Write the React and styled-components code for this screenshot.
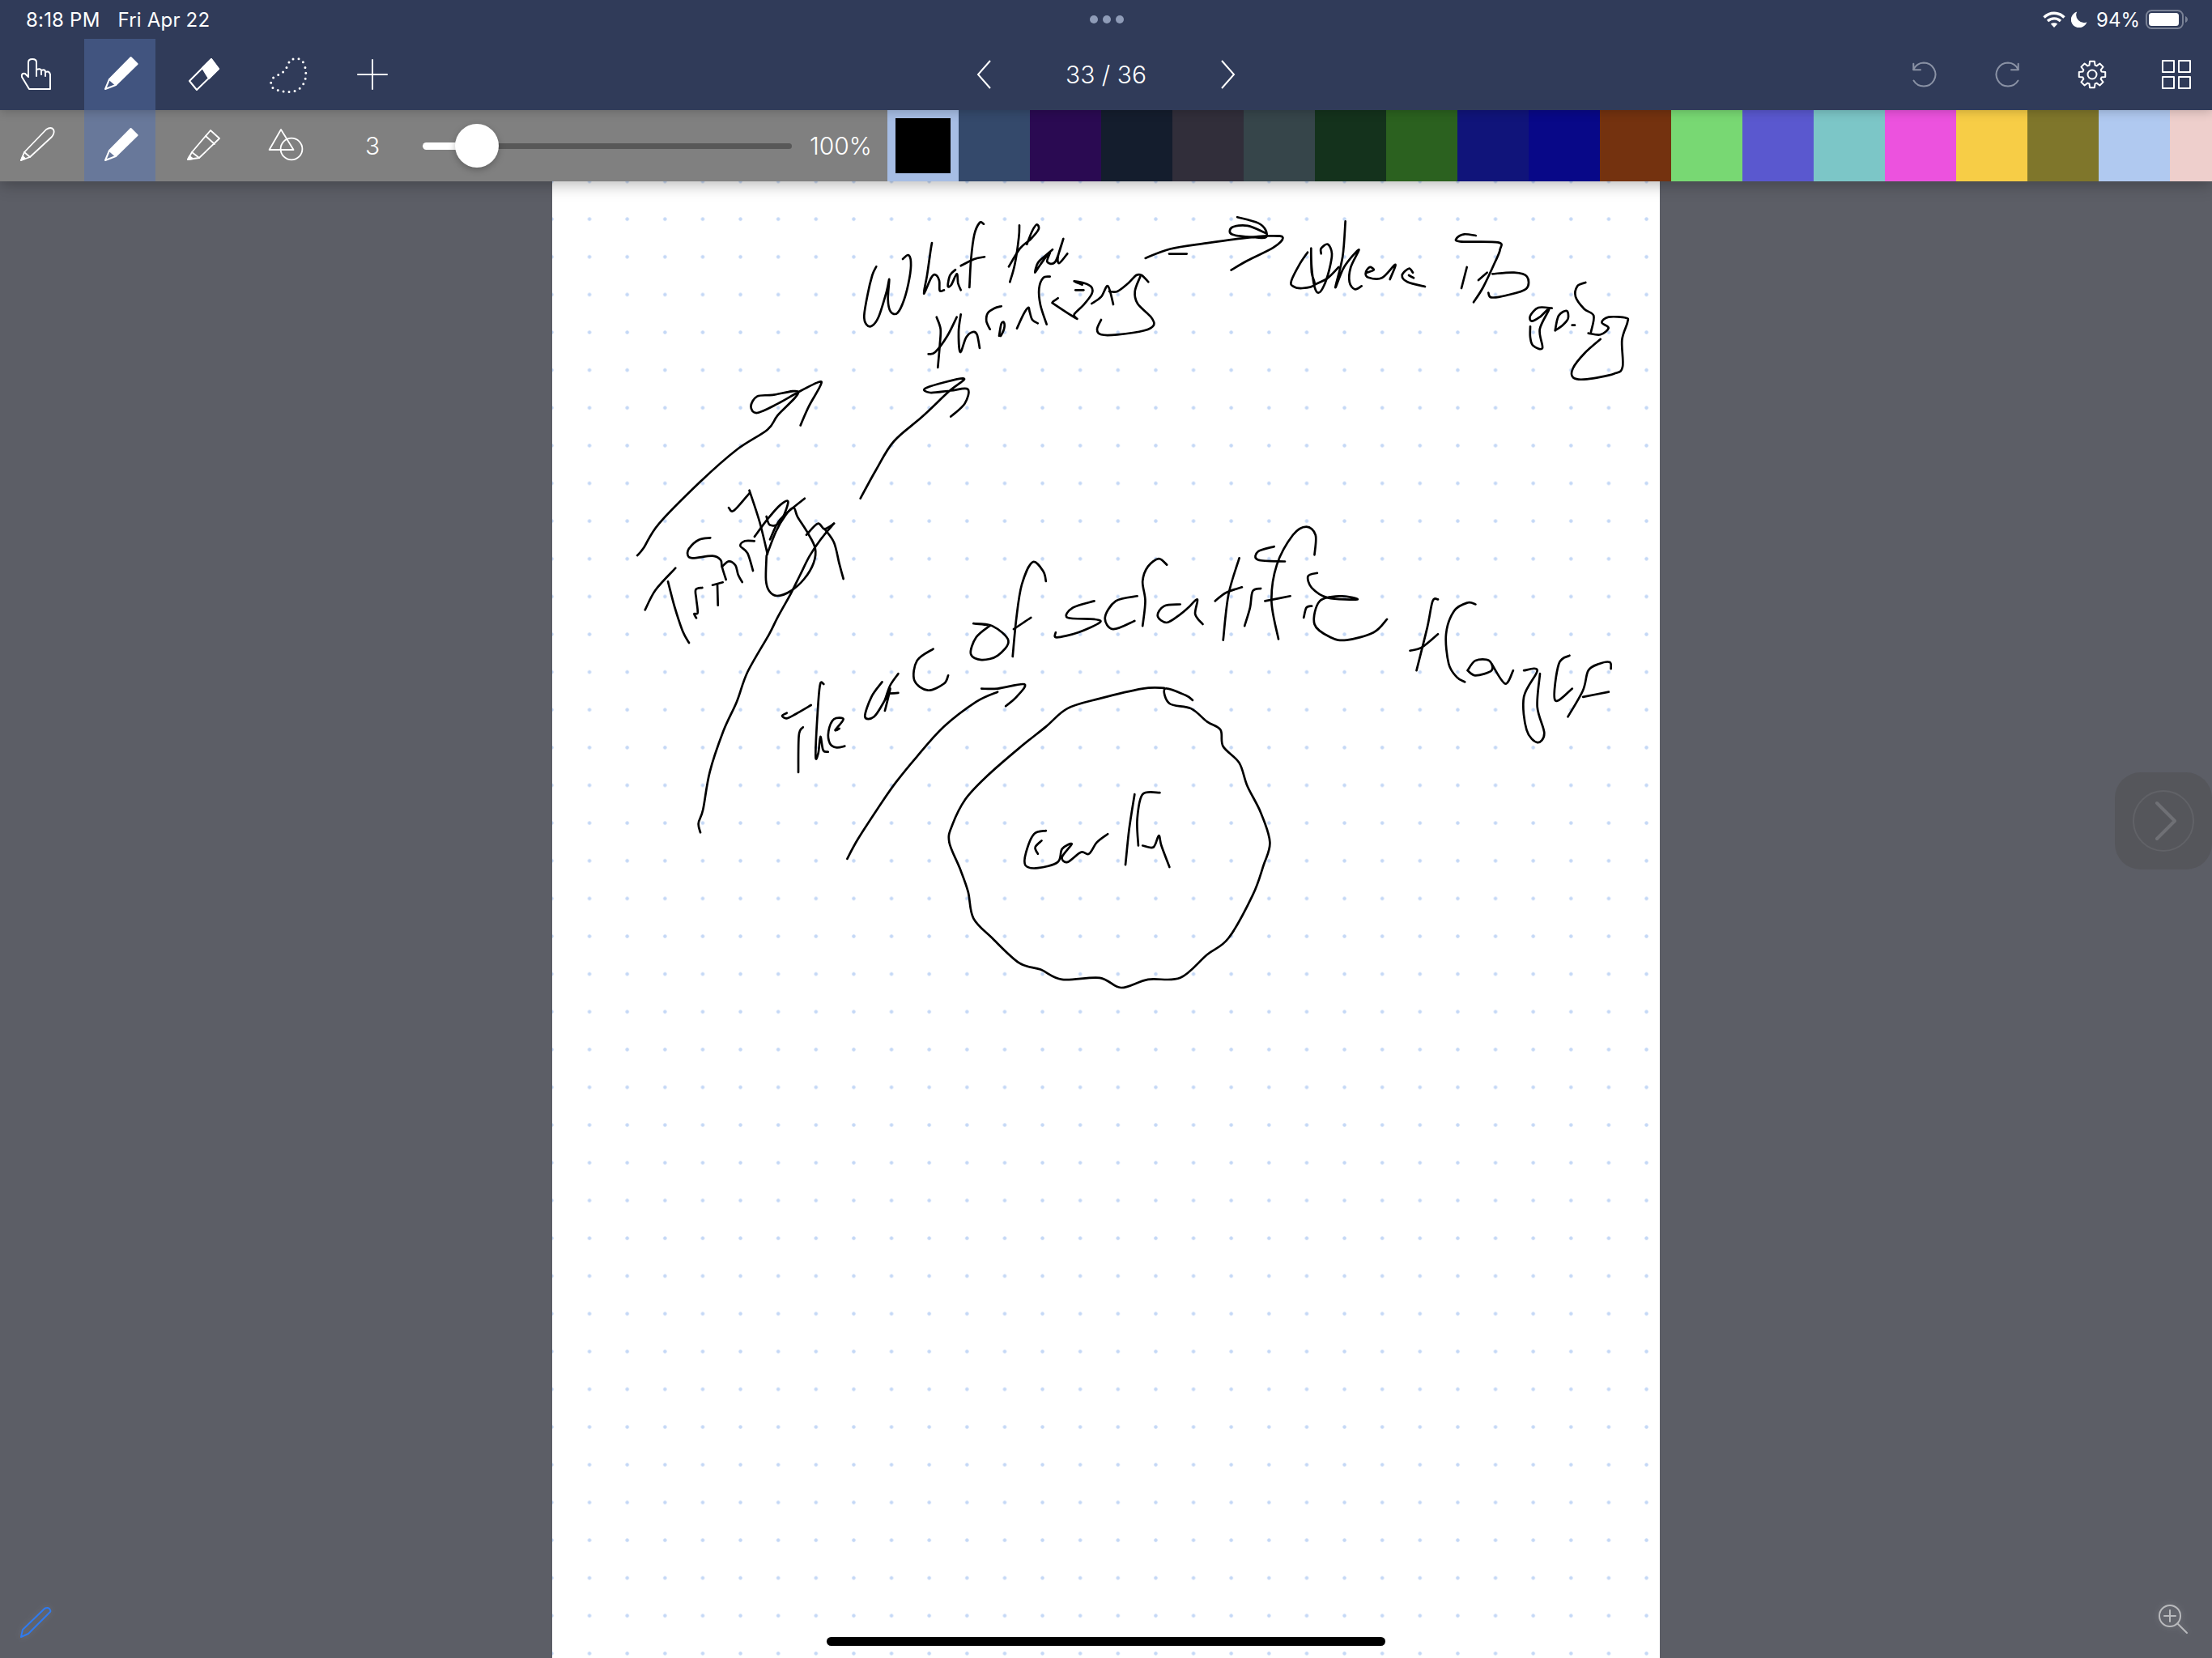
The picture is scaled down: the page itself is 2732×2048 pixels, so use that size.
import React from "react";
import styled, { createGlobalStyle } from "styled-components";

const GlobalStyle = createGlobalStyle`
  html, body {
    margin: 0;
    padding: 0;
    background: #5c5e66;
    overflow: hidden;
  }
  * { box-sizing: border-box; }
`;

const SWATCHES = [
  "#34496b", "#2a0a52", "#141d2d", "#312e3a", "#36454a", "#14321c", "#2b611f", "#10147a", "#080888",
  "#74320f", "#78d873", "#5a58cf", "#7cc6c7", "#ec52de", "#f7cd46", "#7f762b", "#b0c9f0", "#eecfcc",
];

// handwriting, traced per zoom crop: crop origin, scale, then flat x,y lists
const INK = [
  { x: 1040, y: 260, sx: 3, sy: 3, strokes: [
    [127,208,112,240,95,310,82,390,90,422,110,428,135,395,165,300,175,255,170,330,180,375,205,380,230,330,250,250,255,190,245,165,225,180],
    [333,120,328,150,315,240,303,308,330,250,345,238,360,260,362,297,378,295],
    [420,220,400,240,392,280,405,275,425,235,430,270,440,295],
    [525,50,510,45,490,90,478,180,472,285],
    [440,205,490,180,528,172],
    [657,55,655,100,640,200,622,265],
    [618,208,660,140,700,105,728,70,722,52,705,75,685,125],
    [780,145,750,170,725,195,715,230,735,200,770,155,760,190,790,190,820,105,800,170,805,195,835,160],
    [350,395,365,440,362,500,355,582],
    [320,532,345,525,390,465,425,395],
    [440,385,432,450,438,525,460,470,485,450,500,460,510,510],
    [548,440,535,410,540,380,565,362,590,355],
    [582,465,590,420,600,415,600,440,588,465],
    [648,437,672,385,690,360,695,375,705,405,725,418],
    [770,245,745,250,730,290,735,350,758,422],
    [800,325,780,340,790,350,868,400,860,385,895,350,925,310,925,285,900,270,860,262,890,275],
    [865,295,895,295],
    [925,345,960,320,985,280,1005,348],
    [990,300,1020,300,1060,270,1090,240,1110,240,1135,265],
    [1105,245,1085,300,1095,345,1145,395,1155,425,1120,445,1020,460,960,460,945,440,960,405],
  ]},
  { x: 680, y: 220, sx: 1.568, sy: 2.8, strokes: [
    [1152,277,1200,245,1270,225,1340,208,1390,200,1418,205,1400,240,1350,285,1318,318],
    [1198,262,1232,262],
    [1330,135,1370,155,1385,180,1385,205,1365,205,1320,195,1320,170,1350,165,1385,190],
    [168,1305,180,1280,210,1195,290,1050,360,940,420,870,440,820,480,740,430,750,400,755,388,790,400,812,440,780,480,740,520,705,522,720,500,790,484,855],
    [600,1108,630,1010,665,910,720,825,770,740,800,693,728,725,735,742,775,735,808,730,802,780,775,825],
    [385,1080,405,1190,420,1300],
    [345,1140,355,1150,385,1090],
    [395,1240,420,1180,445,1130,460,1120,445,1190,425,1200,418,1170],
    [492,1108,445,1180,425,1250],
  ]},
  { x: 780, y: 640, sx: 3, sy: 3, strokes: [
    [50,340,90,265,163,185],
    [135,235,160,330,190,420,213,462],
    [240,370,232,355,245,350,240,300,238,265,262,258],
    [320,323,318,245],
    [300,248,338,238],
    [292,73,250,80,215,110,208,135,225,148,300,140,330,155,335,180,350,228],
    [335,180,360,160,385,175,395,210,410,237],
    [450,195,430,130,403,103,420,85,455,85],
    [500,140,498,230,510,270,540,288,590,270,640,225,675,165,680,110,650,50,615,-5,600,-39,570,-10,535,50,500,140],
    [750,20,700,80,660,140,625,210,590,280,540,370,510,430,430,570,390,680,340,790,290,940,265,1080,248,1130,255,1165],
    [648,62,690,20,715,40,750,20],
    [715,40,750,90,770,170,785,225],
    [665,693,610,725,575,742,558,732,575,722],
    [635,775,620,805,618,942],
    [712,615,700,612,692,680,682,878,692,870,700,810,710,860,728,866],
    [770,780,755,785,785,745,750,745,730,790,735,835,760,850,790,845],
  ]},
  { x: 1000, y: 620, sx: 1.5077, sy: 2.45, strokes: [
    [135,545,115,590,103,650,120,650,140,600,150,565,140,632],
    [140,600,150,555,165,520],
    [145,580,165,578],
    [230,445,200,480,195,540,220,570,250,550,258,525],
    [335,375,310,410,300,460,320,478,350,465,370,420,340,375,305,368,330,372],
    [378,468,385,350,395,250,415,182,435,210,440,240],
    [380,385,412,350],
    [530,300,490,320,480,350,530,355,540,365,500,395,460,410,458,395],
    [610,285,570,300,550,350,565,385,605,360],
    [620,375,625,300,620,240,630,195,650,172,665,190],
    [690,310,660,315,648,345,665,365,690,340,705,320,722,295,718,340,732,370],
    [800,170,780,280,770,418],
    [755,300,775,275,805,258],
    [810,375,820,320,825,270,840,262],
    [873,415,860,300,870,190,900,100,925,75,942,100,940,160],
    [848,300,895,285],
    [865,135,835,150,835,175,885,180],
    [920,350,925,320,935,315],
    [945,215,928,225,935,260,965,290,1020,295,990,285,950,300,940,370,970,410,1000,418,1050,395,1075,355],
    [1170,295,1160,300,1150,380,1130,510],
    [1118,450,1140,440,1170,400],
    [1220,545,1205,530,1190,490,1185,400,1200,330,1225,305,1240,310],
    [1225,510,1240,480,1265,480,1270,510,1240,525,1225,510],
    [1270,490,1295,550,1310,510],
    [1330,510,1355,510,1330,590,1335,690,1355,728,1368,700,1355,620,1360,520],
    [1415,465,1395,490,1388,600,1420,565],
    [1412,650,1440,570,1450,510,1470,490,1490,485,1492,505],
    [1440,590,1488,575],
    [70,1080,90,1020,130,920,160,850,200,770,250,680,310,605,350,575],
    [320,565,350,565,400,552,385,590,365,618],
    [660,563,620,565,540,595,480,625,440,680,390,745,330,830,290,900,265,980,260,1030,280,1110,295,1180,305,1260,340,1320,390,1395,430,1415,470,1445,540,1440,580,1470,630,1445,690,1440,740,1370,780,1320,825,1190,845,1100,857,1030,840,940,815,860,800,790,770,740,765,690,740,665,710,625,670,610,662,565,700,585,713,600],
    [440,995,418,1005,403,1060,402,1100,425,1108,462,1090,470,1050,488,1035,470,1075,480,1090,505,1060,520,1065,535,1030,555,1005],
    [425,1065,420,1045,432,1025],
    [605,885,595,990,588,1098],
    [612,1040,610,960,620,885,652,880],
    [620,1040,640,1045,650,1010,655,1040,670,1105],
  ]},
  { x: 1560, y: 220, sx: 3, sy: 3, strokes: [
    [165,275,135,320,105,380,110,400,145,408,190,395,180,350,178,260,180,330,190,400,205,425,225,400,245,340,255,280,240,245,215,260,215,280],
    [305,160,295,290,268,405,300,330,355,265,325,330,320,385,340,412,365,400],
    [190,395,240,370,280,330],
    [385,350,410,340,395,330,380,350,390,368,440,370,490,320,470,375],
    [555,350,540,335,515,360,535,385,600,402],
    [540,360,558,370],
    [755,330,735,408],
    [788,213,745,208,718,222,730,235,870,238,878,265,860,310,815,405,780,460],
    [798,378,830,350],
    [850,355,930,350,978,365,975,410,900,435,845,442,835,425],
    [1070,482,1020,480,990,510,995,530,1025,515,1060,485,1025,560,1035,630,1000,620,990,590,990,550],
    [1082,565,1095,510,1125,492,1130,520,1110,545,1082,565],
    [1145,545,1155,545],
    [1195,387,1165,400,1158,440,1190,485,1225,510,1215,570],
    [1205,575,1250,580,1280,555,1255,535,1280,515,1345,518,1350,535,1330,600,1332,700,1300,725,1200,745,1150,740,1148,705,1190,650,1250,597],
  ]},
];

// smooth a point list into a path (catmull-rom to bezier)
function strokePath(flat, crop) {
  const pts = [];
  for (let i = 0; i < flat.length; i += 2) {
    pts.push([crop.x + flat[i] / crop.sx, crop.y + flat[i + 1] / crop.sy]);
  }
  let d = `M${pts[0][0].toFixed(1)} ${pts[0][1].toFixed(1)}`;
  for (let i = 0; i < pts.length - 1; i++) {
    const p0 = pts[i - 1] || pts[i];
    const p1 = pts[i];
    const p2 = pts[i + 1];
    const p3 = pts[i + 2] || p2;
    const c1 = [p1[0] + (p2[0] - p0[0]) / 6, p1[1] + (p2[1] - p0[1]) / 6];
    const c2 = [p2[0] - (p3[0] - p1[0]) / 6, p2[1] - (p3[1] - p1[1]) / 6];
    d += `C${c1[0].toFixed(1)} ${c1[1].toFixed(1)} ${c2[0].toFixed(1)} ${c2[1].toFixed(1)} ${p2[0].toFixed(1)} ${p2[1].toFixed(1)}`;
  }
  return d;
}

// 8 tooth cog outline
function gearPath(cx, cy, outer, inner) {
  const pts = [];
  for (let i = 0; i < 8; i++) {
    const a = (i * Math.PI) / 4 - Math.PI / 2;
    const w = 0.18;
    const g = 0.3;
    pts.push([inner, a - g], [outer, a - w], [outer, a + w], [inner, a + g]);
  }
  return (
    pts
      .map(([r, a], i) => `${i ? "L" : "M"}${(cx + r * Math.cos(a)).toFixed(2)} ${(cy + r * Math.sin(a)).toFixed(2)}`)
      .join("") + "Z"
  );
}

const Icon = ({ children, color = "#fff", width = 2, flip }) => (
  <IconSvg
    viewBox="0 0 88 88"
    fill="none"
    stroke={color}
    strokeWidth={width}
    strokeLinejoin="round"
    strokeLinecap="round"
    $flip={flip}
  >
    {children}
  </IconSvg>
);

const PenIcon = () => (
  <Icon>
    <path d="M31 50L57.6 23L65.6 31L39 57Z" fill="#fff" />
    <path d="M31 50L26 62L39 57" />
  </Icon>
);

export default function App() {
  return (
    <Page>
      <GlobalStyle />
      <TopBar>
        <StatusBar>
          <Clock>
            <span>8:18 PM</span>
            <span>Fri Apr 22</span>
          </Clock>
          <Dots>
            <i />
            <i />
            <i />
          </Dots>
          <StatusRight>
            <svg width="28" height="22" viewBox="0 0 28 22" fill="none" stroke="#fff" strokeWidth="3.4">
              <path d="M1.5 8.5C8.5 1.5 19.5 1.5 26.5 8.5" />
              <path d="M6 13C10.5 8.8 17.5 8.8 22 13" />
              <path d="M14 21L9.8 16.6C12 14.7 16 14.7 18.2 16.6Z" fill="#fff" stroke="none" />
            </svg>
            <svg width="20" height="20" viewBox="0 0 20 20">
              <path d="M7.2 0.6A10 10 0 1 0 19.4 13.2A9.4 9.4 0 0 1 7.2 0.6Z" fill="#fff" />
            </svg>
            <BatteryText>94%</BatteryText>
            <svg width="52" height="24" viewBox="0 0 52 24">
              <rect x="1" y="1" width="45" height="22" rx="6.5" fill="none" stroke="#7a8296" strokeWidth="2" />
              <rect x="4" y="4" width="37" height="16" rx="3.5" fill="#fff" />
              <path d="M49 8C51 9 52 10.5 52 12C52 13.5 51 15 49 16Z" fill="#7a8296" />
            </svg>
          </StatusRight>
        </StatusBar>

        <Toolbar>
          <ToolGroup>
            <ToolCell>
              <Icon>
                <path d="M36 62L27 47Q26 42 31 43L35 47V29Q35 25 40 25Q45 25 45 29V38Q50 36 51 39Q56 37 56 41Q61 39 62 44V62Z" />
                <path d="M45 38V46M51 39V44M56 41V46" />
              </Icon>
            </ToolCell>
            <ToolCell $active>
              <PenIcon />
            </ToolCell>
            <ToolCell>
              <Icon>
                <path d="M26 52L53 25L62 37L35 63Z" />
                <path d="M42 36L53 25L62 37L50 49Z" fill="#fff" />
              </Icon>
            </ToolCell>
            <ToolCell>
              <Icon width={3}>
                <path
                  d="M50 25Q60 22 64 32Q67 42 65 50Q62 62 50 65Q35 67 24 60Q20 52 28 46Q40 42 43 33Q45 27 50 25Z"
                  strokeDasharray="0 7"
                />
              </Icon>
            </ToolCell>
            <ToolCell>
              <Icon>
                <path d="M44 26V62M26 44H62" />
              </Icon>
            </ToolCell>
          </ToolGroup>

          <PageNav>
            <ChevronSvg viewBox="0 0 18 36" fill="none" stroke="#fff" strokeWidth="2">
              <path d="M17 1L2 18L17 35" />
            </ChevronSvg>
            <PageCount>33 / 36</PageCount>
            <ChevronSvg viewBox="0 0 18 36" fill="none" stroke="#fff" strokeWidth="2">
              <path d="M1 1L16 18L1 35" />
            </ChevronSvg>
          </PageNav>

          <ToolGroup $right>
            <ToolCell>
              <Icon color="#8a92a5" flip>
                <path d="M56.7 38A14.5 14.5 0 0 0 44 29.5A14.5 14.5 0 1 0 56.5 51.5" />
                <path d="M56.7 30.7V38.3H48" />
              </Icon>
            </ToolCell>
            <ToolCell>
              <Icon color="#8a92a5">
                <path d="M56.7 38A14.5 14.5 0 0 0 44 29.5A14.5 14.5 0 1 0 56.5 51.5" />
                <path d="M56.7 30.7V38.3H48" />
              </Icon>
            </ToolCell>
            <ToolCell>
              <Icon>
                <path d={gearPath(44, 44, 16.5, 12)} />
                <circle cx="44" cy="44" r="5.5" />
              </Icon>
            </ToolCell>
            <ToolCell>
              <Icon>
                <rect x="27" y="27" width="14" height="14" />
                <rect x="47" y="27" width="14" height="14" />
                <rect x="27" y="47" width="14" height="14" />
                <rect x="47" y="47" width="14" height="14" />
              </Icon>
            </ToolCell>
          </ToolGroup>
        </Toolbar>
      </TopBar>

      <SubBar>
        <ToolGroup>
          <ToolCell>
            <Icon width={1.8}>
              <path d="M26 62L30 52L57 24Q63 20 66 24Q68 28 64 33L37 58Z" />
              <path d="M30 52L37 58" />
              <path d="M26 62L28 57L31 60Z" fill="#fff" />
            </Icon>
          </ToolCell>
          <ToolCell $active $light>
            <PenIcon />
          </ToolCell>
          <ToolCell>
            <Icon width={1.8}>
              <path d="M24 61L29 52L52 25L63 35L38 59Z" />
              <path d="M46 32L57 42M29 52L38 59" />
              <path d="M24 61L26 57L30 60Z" fill="#fff" />
            </Icon>
          </ToolCell>
          <ToolCell>
            <Icon width={1.8}>
              <path d="M35 24L20.6 49H50.5Z" />
              <circle cx="48" cy="48" r="13.4" />
            </Icon>
          </ToolCell>
          <SizeValue>3</SizeValue>
        </ToolGroup>

        <Slider>
          <SliderFill />
          <SliderThumb />
        </Slider>
        <Percent>100%</Percent>

        <Swatches>
          <Swatch $color="#a6bde4" $padded>
            <SwatchInner />
          </Swatch>
          {SWATCHES.map((color) => (
            <Swatch key={color} $color={color} />
          ))}
        </Swatches>
      </SubBar>

      <Canvas>
        <Paper>
          <InkLayer viewBox="682 224 1368 1824" fill="none" stroke="#000" strokeWidth="2.7" strokeLinecap="round" strokeLinejoin="round">
            {INK.map((crop) =>
              crop.strokes.map((flat, i) => <path key={`${crop.x}-${i}`} d={strokePath(flat, crop)} />)
            )}
          </InkLayer>
          <HomeIndicator />
        </Paper>

        <NextHandle>
          <svg width="120" height="120" viewBox="0 0 120 120" fill="none">
            <circle cx="60" cy="60" r="37" stroke="#616267" strokeWidth="2" />
            <path d="M52 38L74 60L52 82" stroke="#6f7075" strokeWidth="4" strokeLinecap="round" strokeLinejoin="round" />
          </svg>
        </NextHandle>

        <PencilBadge viewBox="0 0 48 48" fill="none" stroke="#2f7bf0" strokeWidth="2" strokeLinejoin="round">
          <path d="M6 42L8 33L35 7Q39 5 41 7Q43 10 42 11L15 38Z" />
        </PencilBadge>

        <ZoomBadge viewBox="0 0 48 48" fill="none" stroke="#b9babd" strokeWidth="2" strokeLinecap="round">
          <circle cx="20" cy="20" r="13" />
          <path d="M29.5 29.5L41 41M20 13V27M13 20H27" />
        </ZoomBadge>
      </Canvas>
    </Page>
  );
}

const Page = styled.div`
  position: relative;
  width: 2732px;
  height: 2048px;
  overflow: hidden;
  background: #5c5e66;
  display: flex;
  flex-direction: column;
  font-family: Inter, "Liberation Sans", sans-serif;
  color: #fff;
`;

const TopBar = styled.header`
  position: relative;
  z-index: 3;
  background: #303b59;
  box-shadow: 0 2px 12px rgba(0, 0, 0, 0.2);
`;

const StatusBar = styled.div`
  height: 48px;
  padding: 0 30px 0 32px;
  display: grid;
  grid-template-columns: 1fr auto 1fr;
  align-items: center;
`;

const Clock = styled.div`
  display: flex;
  gap: 22px;
  font-size: 24px;
  letter-spacing: 0.2px;
`;

const Dots = styled.div`
  display: flex;
  gap: 6px;
  i {
    width: 10px;
    height: 10px;
    border-radius: 50%;
    background: #8f9cb8;
  }
`;

const StatusRight = styled.div`
  display: flex;
  align-items: center;
  justify-content: flex-end;
  gap: 7px;
`;

const BatteryText = styled.span`
  font-size: 24px;
  margin-left: 4px;
`;

const Toolbar = styled.div`
  height: 88px;
  display: grid;
  grid-template-columns: 1fr auto 1fr;
  align-items: stretch;
`;

const ToolGroup = styled.div`
  flex: none;
  display: flex;
  gap: 16px;
  justify-content: ${(p) => (p.$right ? "flex-end" : "flex-start")};
`;

const ToolCell = styled.div`
  width: 88px;
  height: 88px;
  display: flex;
  align-items: center;
  justify-content: center;
  background: ${(p) => (p.$active ? (p.$light ? "#68789a" : "#41547f") : "transparent")};
`;

const IconSvg = styled.svg`
  width: 88px;
  height: 88px;
  display: block;
  transform: ${(p) => (p.$flip ? "scaleX(-1)" : "none")};
`;

const PageNav = styled.div`
  display: flex;
  align-items: center;
  gap: 92px;
`;

const ChevronSvg = styled.svg`
  width: 18px;
  height: 36px;
  display: block;
`;

const PageCount = styled.span`
  font-size: 30px;
  font-weight: 300;
  width: 100px;
  text-align: center;
  white-space: nowrap;
`;

const SubBar = styled.div`
  position: relative;
  z-index: 2;
  height: 88px;
  display: flex;
  align-items: stretch;
  background: #808080;
  box-shadow: 0 4px 18px rgba(0, 0, 0, 0.28);
`;

const SizeValue = styled.div`
  width: 88px;
  display: flex;
  align-items: center;
  justify-content: center;
  font-size: 30px;
  font-weight: 300;
`;

const Slider = styled.div`
  position: relative;
  flex: none;
  align-self: center;
  margin-left: 18px;
  width: 456px;
  height: 7px;
  border-radius: 4px;
  background: #585858;
`;

const SliderFill = styled.div`
  position: absolute;
  left: 0;
  top: -1px;
  width: 68px;
  height: 9px;
  border-radius: 5px 0 0 5px;
  background: #fff;
`;

const SliderThumb = styled.div`
  position: absolute;
  left: 40px;
  top: -24px;
  width: 54px;
  height: 54px;
  border-radius: 50%;
  background: #fff;
  box-shadow: 0 3px 8px rgba(0, 0, 0, 0.25);
`;

const Percent = styled.div`
  flex: none;
  align-self: center;
  margin-left: 22px;
  width: 96px;
  font-size: 30px;
  font-weight: 300;
`;

const Swatches = styled.div`
  flex: none;
  display: flex;
`;

const Swatch = styled.div`
  flex: 0 0 88px;
  height: 88px;
  background: ${(p) => p.$color};
  padding: ${(p) => (p.$padded ? "10px" : "0")};
`;

const SwatchInner = styled.div`
  width: 100%;
  height: 100%;
  background: #000;
`;

const Canvas = styled.main`
  position: relative;
  flex: 1;
  display: flex;
  justify-content: center;
`;

const Paper = styled.div`
  position: relative;
  width: 1368px;
  height: 1824px;
  background-color: #fff;
  background-image: radial-gradient(circle, #c4d8f6 1.8px, rgba(196, 216, 246, 0) 2.6px);
  background-size: 46.63px 46.63px;
  background-position: -23.9px -23.3px;
`;

const InkLayer = styled.svg`
  position: absolute;
  inset: 0;
  width: 100%;
  height: 100%;
`;

const HomeIndicator = styled.div`
  position: absolute;
  left: 339px;
  bottom: 15px;
  width: 690px;
  height: 11px;
  border-radius: 6px;
  background: #000;
`;

const NextHandle = styled.div`
  position: absolute;
  right: 0;
  top: 730px;
  width: 120px;
  height: 120px;
  border-radius: 32px;
  background: #55565b;
`;

const PencilBadge = styled.svg`
  position: absolute;
  left: 20px;
  bottom: 20px;
  width: 48px;
  height: 48px;
  filter: drop-shadow(0 0 4px rgba(255, 255, 255, 0.15));
`;

const ZoomBadge = styled.svg`
  position: absolute;
  right: 24px;
  bottom: 24px;
  width: 48px;
  height: 48px;
  filter: drop-shadow(0 0 4px rgba(255, 255, 255, 0.2));
`;
